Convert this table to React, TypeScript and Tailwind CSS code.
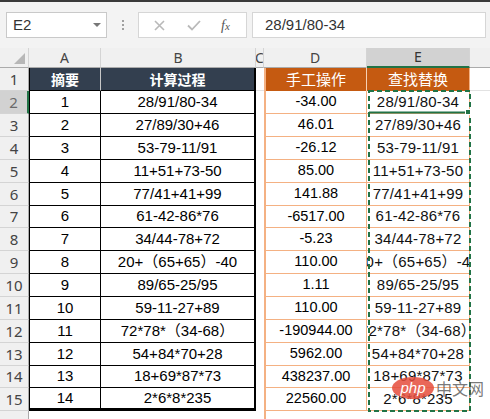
import React from "react";

type Row = { n: number; a: string; b: string; d: string; h: string };

const body: Row[] = [
  { n: 2, a: "1", b: "28/91/80-34", d: "-34.00", h: "h-[23px]" },
  { n: 3, a: "2", b: "27/89/30+46", d: "46.01", h: "h-[23px]" },
  { n: 4, a: "3", b: "53-79-11/91", d: "-26.12", h: "h-[23px]" },
  { n: 5, a: "4", b: "11+51+73-50", d: "85.00", h: "h-[23px]" },
  { n: 6, a: "5", b: "77/41+41+99", d: "141.88", h: "h-[23px]" },
  { n: 7, a: "6", b: "61-42-86*76", d: "-6517.00", h: "h-[22px]" },
  { n: 8, a: "7", b: "34/44-78+72", d: "-5.23", h: "h-[23px]" },
  { n: 9, a: "8", b: "20+（65+65）-40", d: "110.00", h: "h-[23px]" },
  { n: 10, a: "9", b: "89/65-25/95", d: "1.11", h: "h-[23px]" },
  { n: 11, a: "10", b: "59-11-27+89", d: "110.00", h: "h-[23px]" },
  { n: 12, a: "11", b: "72*78*（34-68）", d: "-190944.00", h: "h-[23px]" },
  { n: 13, a: "12", b: "54+84*70+28", d: "5962.00", h: "h-[23px]" },
  { n: 14, a: "13", b: "18+69*87*73", d: "438237.00", h: "h-[22px]" },
  { n: 15, a: "14", b: "2*6*8*235", d: "22560.00", h: "h-[23px]" },
];

const font = "font-['Liberation_Sans','Noto_Sans_CJK_SC',sans-serif]";
const cjk = "font-['Noto_Sans_CJK_SC',sans-serif]";

export default function App() {
  return (
    <div className={`w-[490px] h-[419px] overflow-hidden bg-white ${font} relative`}>
      <div className="h-[2px] bg-[#3a3a3a]" />
      {/* formula bar */}
      <div className="h-[46px] bg-[#f3f3f3] flex items-start pt-[10px] pl-[6px]">
        <div className="w-[101px] h-[26px] bg-white border border-[#c9c9c9] flex items-center pl-[6px] pr-[5px]">
          <span className="text-[15px] text-[#333] flex-1">E2</span>
          <svg width="8" height="5" viewBox="0 0 8 5"><path d="M0 0 L8 0 L4 4 Z" fill="#777" /></svg>
        </div>
        <div className="w-[31px] h-[26px] flex flex-col items-center justify-center gap-[2px]">
          <div className="w-[2px] h-[2px] bg-[#a0a0a0]" />
          <div className="w-[2px] h-[2px] bg-[#a0a0a0]" />
          <div className="w-[2px] h-[2px] bg-[#a0a0a0]" />
        </div>
        <div className="w-[109px] h-[26px] bg-white border border-[#d6d6d6] flex items-center pl-[15px]">
          <svg width="11" height="11" viewBox="0 0 11 11"><path d="M1 1 L10 10 M10 1 L1 10" stroke="#b9b9b9" strokeWidth="1.6" /></svg>
          <svg className="ml-[22px]" width="14" height="11" viewBox="0 0 14 11"><path d="M1 5.5 L5 9.5 L13 1" stroke="#b9b9b9" strokeWidth="1.8" fill="none" /></svg>
          <span className="ml-[20px] text-[14px] italic text-[#555] font-['Liberation_Serif',serif]">f<span className="text-[11px]">x</span></span>
        </div>
        <div className="ml-[5px] w-[234px] h-[26px] bg-white border border-[#d6d6d6] flex items-center pl-[12px]">
          <span className="text-[15px] text-[#333]">28/91/80-34</span>
        </div>
      </div>
      {/* column headers */}
      <div className="h-[20px] flex bg-[#f0f0f0] text-[14px] text-[#444] font-['Noto_Sans',sans-serif] leading-none">
        <div className="w-[29px] border-r border-b border-r-[#d4d4d4] border-b-[#ababab] relative">
          <svg className="absolute right-[3px] bottom-[3px]" width="11" height="11" viewBox="0 0 11 11"><path d="M11 0 L11 11 L0 11 Z" fill="#b7b7b7" /></svg>
        </div>
        <div className="w-[72px] border-r border-b border-r-[#d4d4d4] border-b-[#ababab] flex items-center justify-center">A</div>
        <div className="w-[155px] border-r border-b border-r-[#d4d4d4] border-b-[#ababab] flex items-center justify-center">B</div>
        <div className="w-[8px] border-r border-b border-r-[#d4d4d4] border-b-[#ababab] flex items-center justify-center overflow-hidden">C</div>
        <div className="w-[103px] border-r border-b border-r-[#d4d4d4] border-b-[#ababab] flex items-center justify-center">D</div>
        <div className="w-[103px] border-r border-b-2 border-r-[#d4d4d4] border-b-[#217346] bg-[#d2d2d2] flex items-center justify-center text-[#333]">E</div>
        <div className="flex-1 border-b border-b-[#ababab]" />
      </div>
      {/* row 1 */}
      <div className="h-[23px] flex">
        <div className="w-[29px] bg-[#f0f0f0] border-r border-b border-r-[#ababab] border-b-[#d4d4d4] flex items-center justify-center text-[15px] text-[#444] font-['Noto_Sans',sans-serif]">1</div>
        <div className={`w-[72px] bg-[#333f4f] border-l border-l-black border-r border-r-[#c8c8c8] border-b border-b-black flex items-center justify-center text-white text-[14px] font-bold ${cjk}`}>摘要</div>
        <div className={`w-[155px] bg-[#333f4f] border-r-2 border-r-black border-b border-b-black flex items-center justify-center text-white text-[14px] font-bold ${cjk}`}>计算过程</div>
        <div className="w-[8px] border-b border-b-[#e2e2e2]" />
        <div className={`w-[103px] bg-[#c55a11] border-l-2 border-l-[#f4b183] border-r border-r-[#f6d0b4] flex items-center justify-center text-white text-[15px] ${cjk}`}>手工操作</div>
        <div className={`w-[103px] bg-[#c55a11] border-r border-r-[#f4b183] flex items-center justify-center text-white text-[15px] ${cjk}`}>查找替换</div>
        <div className="flex-1 border-b border-b-[#e2e2e2]" />
      </div>
      {body.map((r, i) => {
        const last = i === body.length - 1;
        const sel = r.n === 2;
        return (
          <div key={r.n} className={`${r.h} flex`}>
            <div
              className={`w-[29px] border-b border-b-[#d4d4d4] flex items-center justify-center text-[15px] font-['Noto_Sans',sans-serif] ${
                sel ? "bg-[#d2d2d2] border-r-2 border-r-[#217346] text-[#6a6a6a]" : "bg-[#f0f0f0] border-r border-r-[#ababab] text-[#444]"
              }`}
            >
              {r.n}
            </div>
            <div className={`w-[72px] border-l border-l-black border-r border-r-black ${last ? "border-b-[3px]" : "border-b"} border-b-black flex items-center justify-center text-[15px] text-black`}>
              {r.a}
            </div>
            <div className={`w-[155px] border-r-2 border-r-black ${last ? "border-b-[3px]" : "border-b"} border-b-black flex items-center justify-center text-[15px] text-black whitespace-nowrap`}>
              {r.b}
            </div>
            <div className="w-[8px]" />
            <div className="w-[103px] border-l-2 border-l-[#f4b183] border-r border-r-[#f4b183] border-b border-b-[#f4b183] flex items-center justify-center text-[14.5px] text-black">
              {r.d}
            </div>
            <div className="w-[103px] border-r border-r-[#f4b183] border-b border-b-[#f4b183] flex items-center justify-center overflow-hidden">
              <span className="whitespace-nowrap shrink-0 text-[15px] tracking-[0.2px] text-[#111]">{r.b}</span>
            </div>
            <div className="flex-1" />
          </div>
        );
      })}
      {/* row 16 partial */}
      <div className="h-[8px] flex">
        <div className="w-[29px] bg-[#f0f0f0] border-r border-r-[#ababab]" />
        <div className="w-[227px]" />
        <div className="w-[8px]" />
        <div className="w-[103px] border-l-2 border-l-[#f4b183]" />
        <div className="flex-1" />
      </div>

      {/* copy marquee + selection over E2:E15 */}
      <svg className="absolute left-[367px] top-[89px]" width="105" height="324" viewBox="0 0 105 324">
        <rect x="2" y="2" width="101" height="320" fill="none" stroke="#217346" strokeWidth="2" strokeDasharray="5 3" />
        <line x1="2" y1="23.5" x2="100" y2="23.5" stroke="#217346" strokeWidth="2" />
        <rect x="98.5" y="20.5" width="5" height="5" fill="#217346" stroke="white" strokeWidth="1" />
      </svg>

      {/* watermark */}
      <div className="absolute left-[392px] top-[376px] flex items-center">
        <div className="w-[42px] h-[22px] rounded-[50%] bg-[#e54c3c]/85 flex items-center justify-center">
          <span className="text-white text-[15px] italic font-['Liberation_Sans',sans-serif] leading-none -mt-[2px]">php</span>
        </div>
        <span className={`ml-[2px] text-[16px] text-[#555]/80 ${cjk}`}>中文网</span>
      </div>
    </div>
  );
}
